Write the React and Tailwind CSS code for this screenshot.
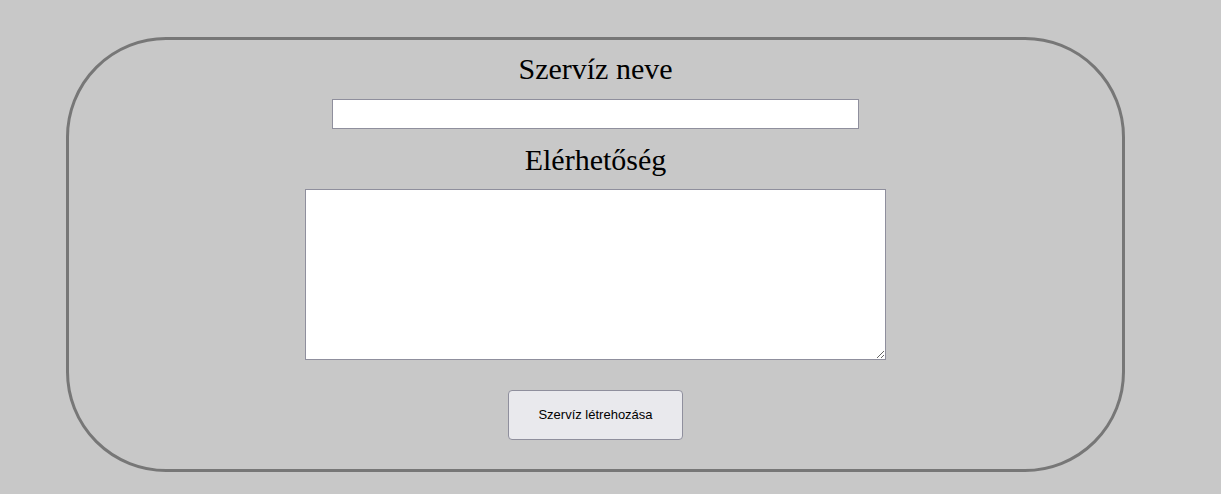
export default function App() {
  return (
    <div className="h-[494px] w-full bg-[#c8c8c8] pt-[37px] px-[66px] overflow-hidden">
      <div className="h-[435px] w-[1059px] border-[3px] border-[#777777] rounded-[100px] flex flex-col items-center pt-[12px]">
        <h2 className="font-['Liberation_Serif',serif] text-[30px] leading-[34px] text-black">Szervíz neve</h2>
        <input
          type="text"
          className="mt-[13px] w-[527px] h-[30px] bg-white border border-[#8f8f9d] outline-none px-1"
        />
        <h2 className="mt-[14px] font-['Liberation_Serif',serif] text-[30px] leading-[34px] text-black">Elérhetőség</h2>
        <textarea className="mt-[12px] w-[581px] h-[171px] bg-white border border-[#8f8f9d] outline-none resize" />
        <button className="mt-[30px] w-[175px] h-[50px] bg-[#e9e9ed] border border-[#8f8f9d] rounded-[4px] font-['Liberation_Sans',sans-serif] text-[13px] text-black">
          Szervíz létrehozása
        </button>
      </div>
    </div>
  );
}
